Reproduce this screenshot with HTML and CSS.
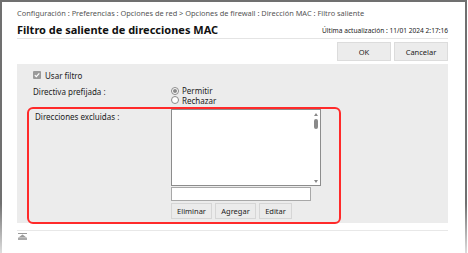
FILE: index.html
```
<!DOCTYPE html>
<html lang="es">
<head>
<meta charset="utf-8">
<title>Filtro de saliente de direcciones MAC</title>
<link rel="stylesheet" href="styles.css">
</head>
<body>
<div class="window">
  <div class="crumbs">Configuración : Preferencias : Opciones de red &gt; Opciones de firewall : Dirección MAC : Filtro saliente</div>
  <div class="head">
    <h1 class="title">Filtro de saliente de direcciones MAC</h1>
    <div class="updated">Última actualización : 11/01 2024 2:17:16</div>
  </div>
  <div class="actions">
    <button class="btn big">OK</button>
    <button class="btn big">Cancelar</button>
  </div>
  <div class="panel">
    <div class="check-row"><span class="cb"><svg viewBox="0 0 8 8" width="8" height="8"><path d="M1.8 4.2 L3.3 5.7 L6.3 2.3" fill="none" stroke="#fff" stroke-width="1.2"/></svg></span><span>Usar filtro</span></div>
    <div class="field directive">
      <div class="label">Directiva prefijada :</div>
      <div class="radios">
        <label class="radio"><span class="rb on"></span>Permitir</label>
        <label class="radio"><span class="rb"></span>Rechazar</label>
      </div>
    </div>
    <div class="field excluded">
      <div class="label pad">Direcciones excluidas :</div>
      <div class="editor">
        <div class="list">
          <div class="scrollbar">
            <span class="arrow up"></span>
            <span class="thumb"></span>
            <span class="track"></span>
            <span class="arrow down"></span>
          </div>
        </div>
        <div class="input"></div>
        <div class="small-btns">
          <button class="btn sm">Eliminar</button>
          <button class="btn sm">Agregar</button>
          <button class="btn sm">Editar</button>
        </div>
      </div>
    </div>
    <div class="highlight"></div>
  </div>
  <div class="rule"></div>
  <div class="totop"><svg viewBox="0 0 9 7" width="9" height="7"><rect x="0" y="0" width="9" height="1" fill="#999"/><path d="M4.5 1.6 L8.5 4.6 L0.5 4.6 Z" fill="#9a9a9a"/><rect x="0" y="4.6" width="9" height="2.4" fill="#aaa"/></svg></div>
</div>
</body>
</html>
```
FILE: styles.css
```
* { box-sizing: border-box; }
html, body { margin: 0; padding: 0; background: #fff; }
body {
  font-family: "Noto Sans", "Open Sans", sans-serif;
  font-size: 8px;
  color: #222;
  width: 468px;
  height: 253px;
  overflow: hidden;
}
.window {
  position: relative;
  width: 467px;
  height: 253px;
  border-top: 2px solid #7a7a7a;
  border-left: 2px solid #6e6e6e;
  border-right: 2px solid #707070;
  border-image: linear-gradient(to bottom, #707070 0%, #707070 80%, #e0e0e0 100%) 1;
  padding: 0 17px 0 15px;
}
.crumbs {
  color: #555;
  font-size: 7.4px;
  line-height: 10px;
  padding-top: 6px;
  white-space: nowrap;
}
.head {
  display: flex;
  align-items: flex-end;
  justify-content: space-between;
  border-bottom: 1px solid #e4e4e4;
  height: 21px;
  padding-bottom: 1px;
}
.title {
  margin: 0;
  font-size: 11px;
  font-weight: bold;
  color: #111;
  line-height: 14px;
}
.updated {
  font-size: 6.6px;
  line-height: 10px;
  color: #222;
  padding-bottom: 1px;
}
.actions {
  display: flex;
  justify-content: flex-end;
  gap: 3px;
  padding-top: 3px;
  height: 25px;
}
.btn {
  font-family: inherit;
  font-size: 7.5px;
  color: #222;
  background: #ececec;
  border: 1px solid #dcdcdc;
  border-radius: 0;
  padding: 0;
  margin: 0;
}
.btn.big { width: 54px; height: 19px; }
.panel {
  position: relative;
  background: #ececec;
  height: 159px;
  padding: 6px 16px 0 16px;
}
.check-row {
  display: flex;
  align-items: center;
  gap: 4px;
  height: 10px;
  margin-top: 0;
}
.cb {
  width: 8px;
  height: 8px;
  background: #9a9a9a;
  border-radius: 1px;
  display: block;
}
.cb svg { display: block; }
.field { display: flex; }
.label { width: 138px; flex: none; }
.directive { margin-top: 6px; }
.directive .label { line-height: 10px; padding-top: 1px; }
.radios { display: flex; flex-direction: column; }
.radio { display: flex; align-items: center; gap: 3px; height: 9.5px; }
.rb {
  width: 8px; height: 8px;
  border: 1px solid #8a8a8a;
  border-radius: 50%;
  background: #fff;
  display: block;
  position: relative;
}
.rb.on::after {
  content: "";
  position: absolute;
  left: 1px; top: 1px;
  width: 4px; height: 4px;
  border-radius: 50%;
  background: #8a8a8a;
}
.excluded { margin-top: 4px; }
.excluded .label { padding-left: 2px; padding-top: 2px; }
.editor { display: flex; flex-direction: column; }
.list {
  width: 150px;
  height: 77px;
  background: #fff;
  border: 1px solid #8c8c8c;
  display: flex;
  justify-content: flex-end;
}
.scrollbar {
  width: 8px;
  display: flex;
  flex-direction: column;
  align-items: center;
  padding: 3px 0 2px;
}
.arrow { width: 0; height: 0; border-left: 2.5px solid transparent; border-right: 2.5px solid transparent; }
.arrow.up { border-bottom: 3px solid #888; }
.arrow.down { border-top: 3px solid #888; }
.thumb { width: 4px; height: 10px; background: #8a8a8a; border-radius: 2px; margin-top: 3px; }
.track { flex: 1; }
.input {
  width: 140px;
  height: 14px;
  background: #fff;
  border: 1px solid #a8a8a8;
  margin-top: 1px;
}
.small-btns { display: flex; gap: 3px; margin-top: 2px; }
.btn.sm { height: 16px; padding: 0 4px; background: #ebebeb; border-color: #d6d6d6; }
.btn.sm:nth-child(1) { width: 41px; }
.btn.sm:nth-child(2) { width: 41px; }
.btn.sm:nth-child(3) { width: 33px; }
.highlight {
  position: absolute;
  left: 10px;
  top: 43px;
  width: 314px;
  height: 117px;
  border: 2px solid #ff2a2a;
  border-radius: 6px;
  pointer-events: none;
}
.rule {
  margin-top: 7px;
  border-top: 1px solid #e8e8e8;
}
.totop { padding: 2px 0 0 1px; }
.totop svg { display: block; }
```
